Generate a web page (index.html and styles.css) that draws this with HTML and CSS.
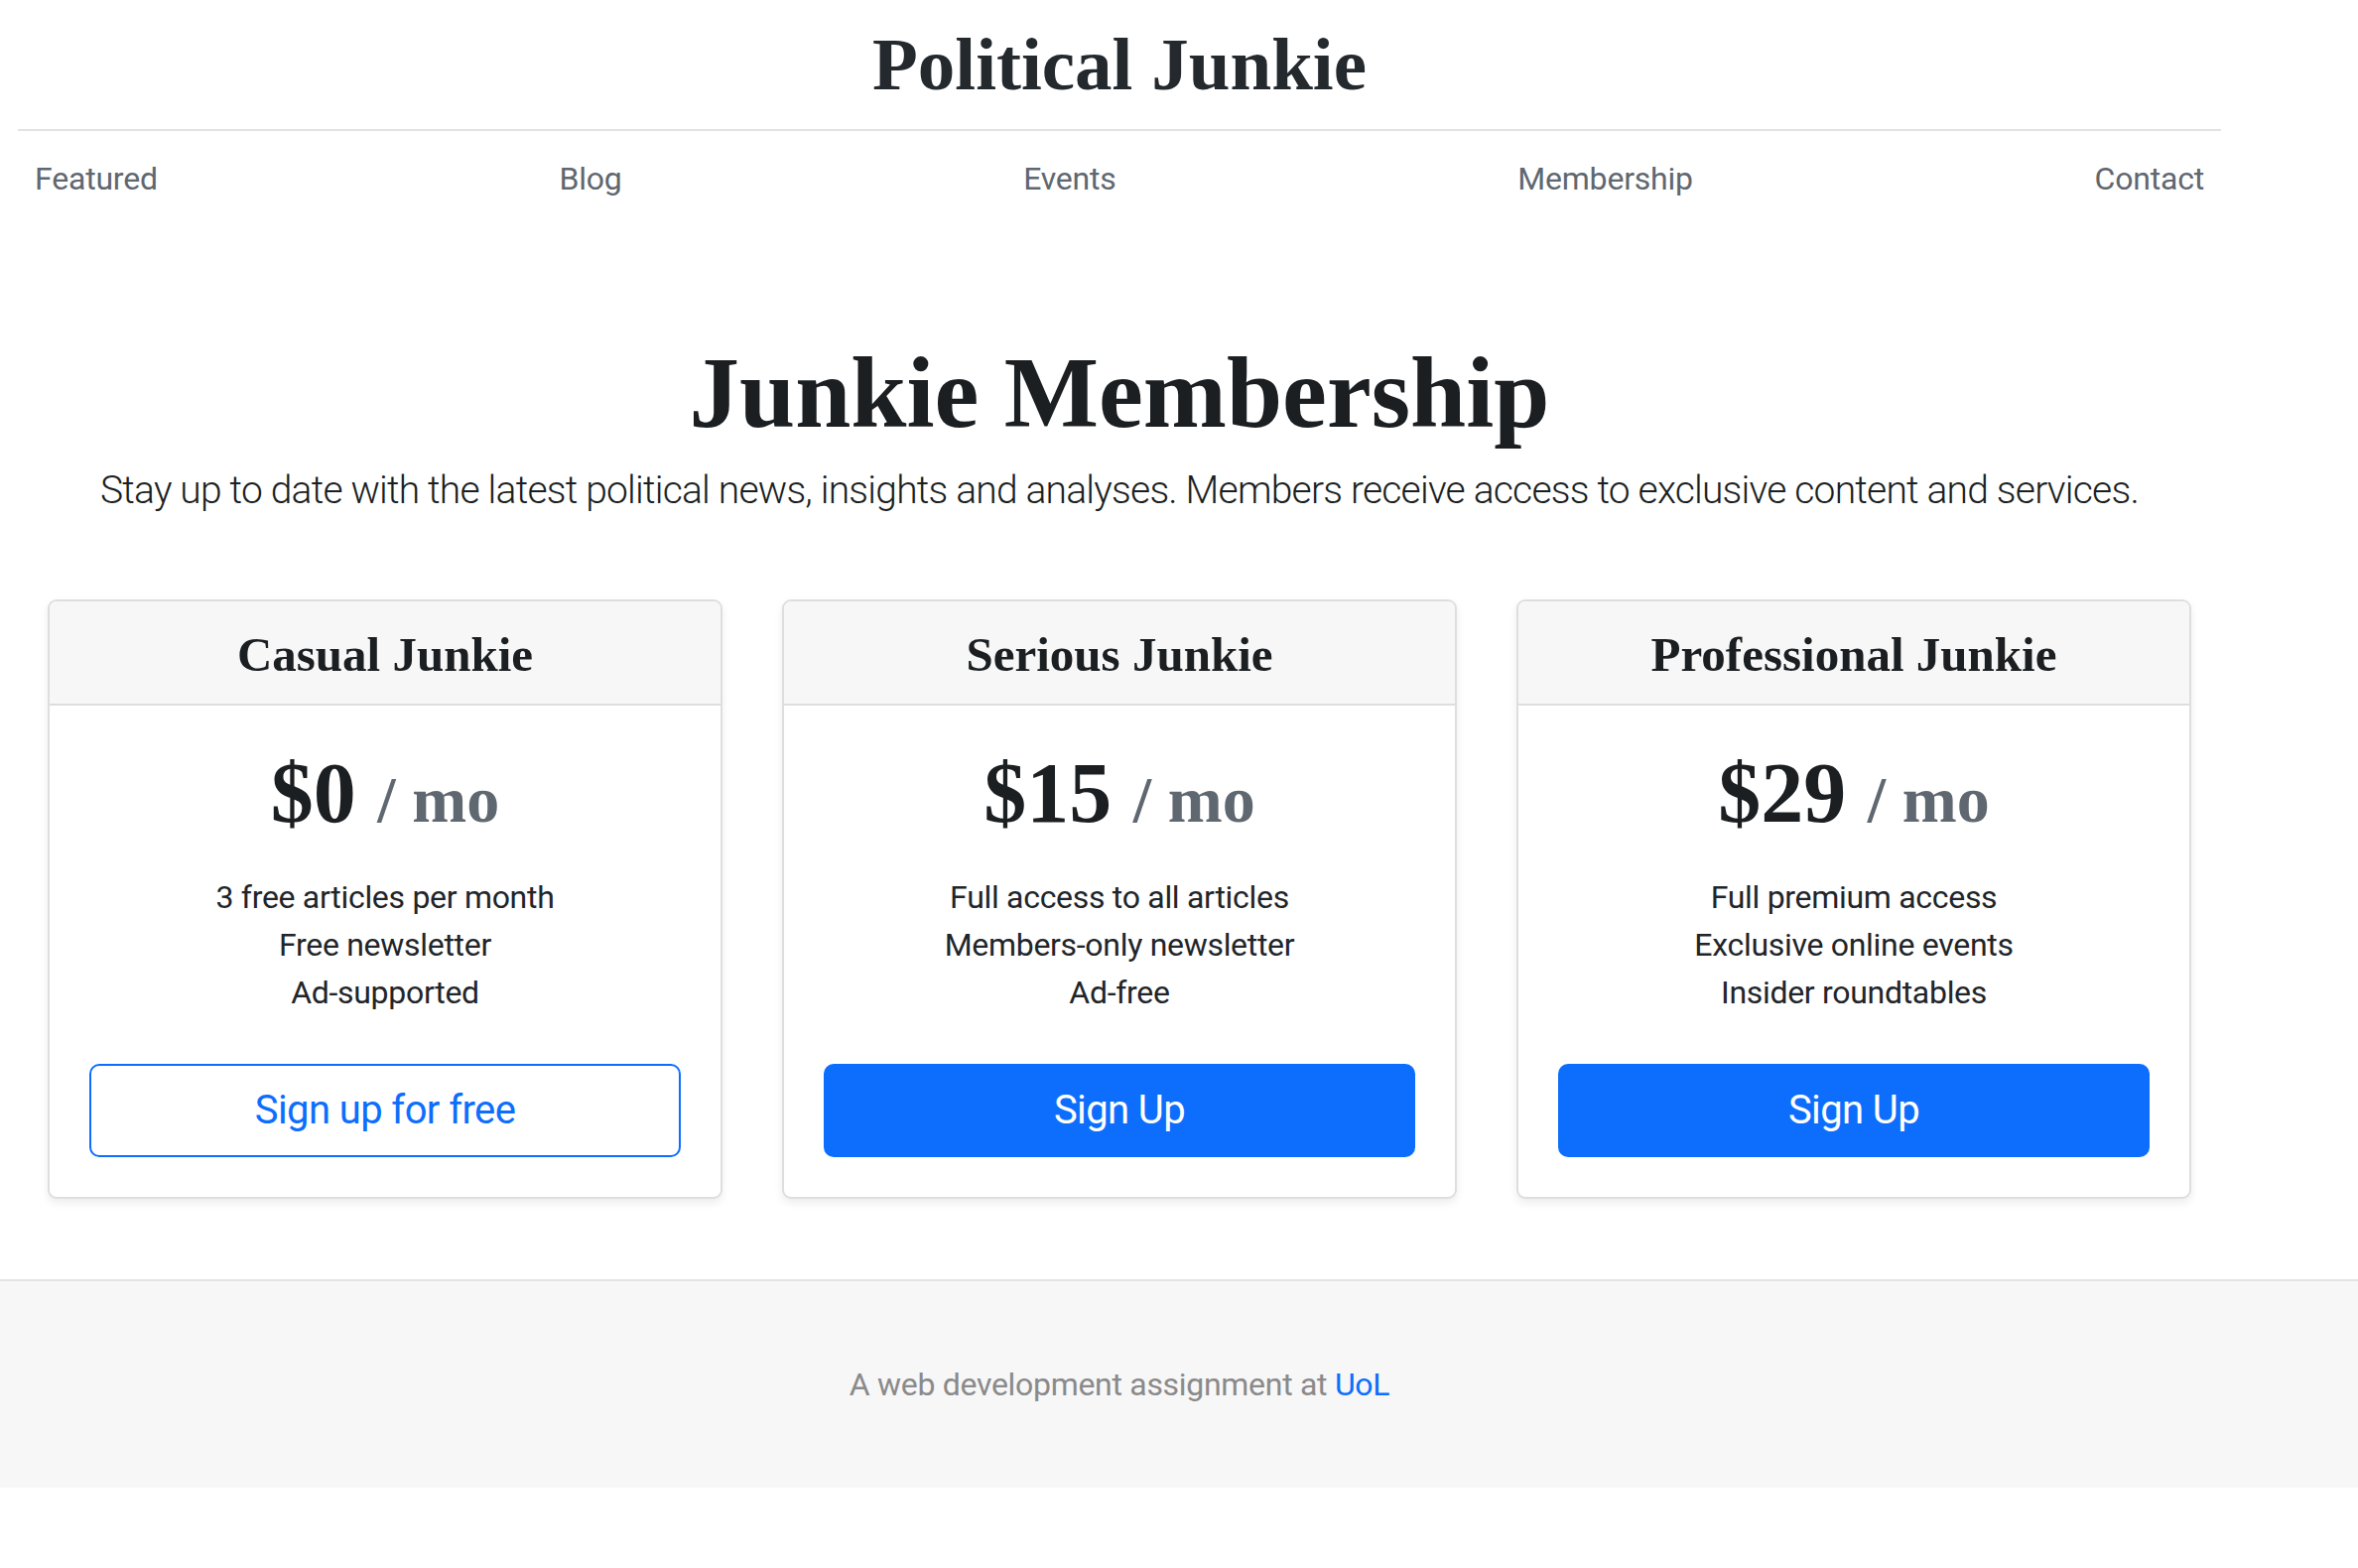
FILE: index.html
```html
<!DOCTYPE html>
<html lang="en">
<head>
<meta charset="utf-8">
<title>Junkie Membership</title>
<link rel="stylesheet" href="styles.css">
</head>
<body>
<div class="page">
  <header class="site-header">
    <a class="brand" href="#">Political Junkie</a>
  </header>
  <nav class="site-nav">
    <a href="#">Featured</a>
    <a href="#">Blog</a>
    <a href="#">Events</a>
    <a href="#">Membership</a>
    <a href="#">Contact</a>
  </nav>
  <section class="intro">
    <h1>Junkie Membership</h1>
    <p class="lead">Stay up to date with the latest political news, insights and analyses. Members receive access to exclusive content and services.</p>
  </section>
  <main class="plans">
    <div class="card">
      <div class="card-header"><h4>Casual Junkie</h4></div>
      <div class="card-body">
        <h2 class="price">$0 <small>/ mo</small></h2>
        <ul class="features">
          <li>3 free articles per month</li>
          <li>Free newsletter</li>
          <li>Ad-supported</li>
        </ul>
        <button class="btn btn-outline" type="button">Sign up for free</button>
      </div>
    </div>
    <div class="card">
      <div class="card-header"><h4>Serious Junkie</h4></div>
      <div class="card-body">
        <h2 class="price">$15 <small>/ mo</small></h2>
        <ul class="features">
          <li>Full access to all articles</li>
          <li>Members-only newsletter</li>
          <li>Ad-free</li>
        </ul>
        <button class="btn btn-primary" type="button">Sign Up</button>
      </div>
    </div>
    <div class="card">
      <div class="card-header"><h4>Professional Junkie</h4></div>
      <div class="card-body">
        <h2 class="price">$29 <small>/ mo</small></h2>
        <ul class="features">
          <li>Full premium access</li>
          <li>Exclusive online events</li>
          <li>Insider roundtables</li>
        </ul>
        <button class="btn btn-primary" type="button">Sign Up</button>
      </div>
    </div>
  </main>
</div>
<footer class="site-footer">
  <div class="footer-inner">
    <p>A web development assignment at <a href="#">UoL</a></p>
  </div>
</footer>
</body>
</html>
```

FILE: styles.css
```css
* { box-sizing: border-box; }

html, body {
  margin: 0;
  padding: 0;
  background: #fff;
}

body {
  font-family: Roboto, "Liberation Sans", Arial, sans-serif;
  font-size: 32px;
  line-height: 1.5;
  color: #212529;
}

a { text-decoration: none; }

.page {
  width: 2220px;
  margin: 0 0 0 18px;
}

/* Header */
.site-header {
  text-align: center;
  padding: 27px 0 28px;
  border-bottom: 2px solid #e3e3e3;
  line-height: 1;
}

.brand {
  font-family: "Liberation Serif", "Times New Roman", serif;
  font-weight: 700;
  font-size: 75px;
  color: #24292e;
}

/* Nav */
.site-nav {
  display: flex;
  justify-content: space-between;
}

.site-nav a {
  padding: 24px 17px;
  font-size: 32px;
  line-height: 48px;
  letter-spacing: -0.2px;
  color: #5f6770;
}

/* Intro */
.intro {
  text-align: center;
  padding-top: 108px;
}

.intro h1 {
  margin: 0 0 7px;
  font-family: "Liberation Serif", "Times New Roman", serif;
  font-weight: 700;
  font-size: 101px;
  line-height: 1.2;
  color: #1b1f22;
}

.lead {
  margin: 0;
  font-size: 39px;
  font-weight: 300;
  line-height: 60px;
  letter-spacing: -0.8px;
  color: #1b1f22;
}

/* Pricing cards */
.plans {
  display: grid;
  grid-template-columns: repeat(3, 1fr);
  gap: 60px;
  padding: 0 30px;
  margin-top: 80px;
}

.card {
  border: 2px solid #dedede;
  border-radius: 9px;
  background: #fff;
  box-shadow: 0 4px 8px rgba(0, 0, 0, 0.075);
  overflow: hidden;
  text-align: center;
}

.card-header {
  background: #f7f7f7;
  border-bottom: 2px solid #dedede;
  padding: 25px 40px 19px;
}

.card-header h4 {
  margin: 0;
  font-family: "Liberation Serif", "Times New Roman", serif;
  font-weight: 700;
  font-size: 49px;
  line-height: 1.2;
  color: #1b1f22;
}

.card-body {
  padding: 40px;
}

.price {
  margin: 0 0 26px;
  font-family: "Liberation Serif", "Times New Roman", serif;
  font-weight: 700;
  font-size: 86px;
  line-height: 96px;
  color: #1b1f22;
}

.price small {
  font-size: 66px;
  color: #5f6770;
}

.features {
  list-style: none;
  margin: 0 0 48px;
  padding: 0;
  font-size: 32px;
  line-height: 48px;
  letter-spacing: -0.3px;
}

.btn {
  display: block;
  width: 100%;
  padding: 16px 32px;
  font-family: Roboto, "Liberation Sans", Arial, sans-serif;
  font-size: 40px;
  line-height: 58px;
  letter-spacing: -0.6px;
  border: 2px solid #0d6efd;
  border-radius: 10px;
  cursor: pointer;
}

.btn-outline {
  background: transparent;
  color: #0d6efd;
}

.btn-primary {
  background: #0d6efd;
  color: #fff;
}

/* Footer */
.site-footer {
  margin-top: 81px;
  background: #f7f7f7;
  border-top: 2px solid #e3e3e3;
  padding: 80px 0;
  color: #8a8a8a;
}

.footer-inner {
  width: 2220px;
  margin: 0 0 0 18px;
  text-align: center;
}

.site-footer p {
  margin: 0;
  letter-spacing: -0.3px;
}

.site-footer a {
  color: #0d6efd;
}
```
